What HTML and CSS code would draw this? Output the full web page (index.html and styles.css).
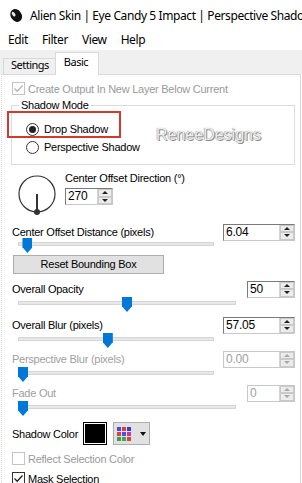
FILE: index.html
```html
<!DOCTYPE html>
<html lang="en">
<head>
  <meta charset="UTF-8">
  <meta name="viewport" content="width=device-width, initial-scale=1.0">
  <title>Perspective Shadow</title>
  <link rel="stylesheet" href="styles.css">
</head>
<body>
  <div class="window">
    <div class="title-bar">
      <svg class="app-icon" width="14" height="15" viewBox="0 0 14 15">
        <ellipse cx="7.2" cy="7.5" rx="5.4" ry="6.8" transform="rotate(-35 7.2 7.5)" fill="#111"/>
        <ellipse cx="4.6" cy="6.2" rx="1.5" ry="2.6" transform="rotate(-35 4.6 6.2)" fill="#e8e8e8"/>
      </svg>
      <span class="title">Alien Skin | Eye Candy 5 Impact | Perspective Shadow</span>
    </div>

    <div class="menu-bar">
      <span class="menu-item">Edit</span>
      <span class="menu-item">Filter</span>
      <span class="menu-item">View</span>
      <span class="menu-item">Help</span>
    </div>

    <div class="tab-strip">
      <div class="tab">Settings</div>
      <div class="tab active">Basic</div>
    </div>

    <div class="panel">
      <div class="check disabled">
        <span class="box">
          <svg width="11" height="11" viewBox="0 0 11 11"><path d="M1.5 5.5 L4.2 8.2 L9.5 2.5" fill="none" stroke="#b5b5b5" stroke-width="1.3"/></svg>
        </span>
        Create Output In New Layer Below Current
      </div>

      <fieldset class="group">
        <legend>Shadow Mode</legend>
        <div class="radio">
          <span class="dot on"></span>Drop Shadow
          <span class="highlight"></span>
          <span class="watermark">ReneeDesigns</span>
        </div>
        <div class="radio">
          <span class="dot"></span>Perspective Shadow
        </div>
      </fieldset>

      <div class="dial-row">
        <svg class="dial" width="40" height="44" viewBox="0 0 40 44">
          <circle cx="20" cy="21" r="18" fill="none" stroke="#333" stroke-width="1.2"/>
          <line x1="20" y1="21" x2="20" y2="39" stroke="#333" stroke-width="2"/>
          <circle cx="20" cy="39" r="3" fill="#333"/>
        </svg>
        <div class="dial-info">
          <div class="label">Center Offset Direction (°)</div>
          <div class="spin narrow">
            <span class="spin-value">270</span>
            <span class="spin-btns"><span class="up"></span><span class="down"></span></span>
          </div>
        </div>
      </div>

      <div class="param tight">
        <div class="param-row">
          <span class="label">Center Offset Distance (pixels)</span>
          <div class="spin wide">
            <span class="spin-value">6.04</span>
            <span class="spin-btns"><span class="up"></span><span class="down"></span></span>
          </div>
        </div>
        <div class="slider">
          <div class="track"></div>
          <div class="rail"><span class="thumb" style="left: 2.4%"></span></div>
        </div>
      </div>

      <div class="reset-btn">Reset Bounding Box</div>

      <div class="param opacity">
        <div class="param-row">
          <span class="label">Overall Opacity</span>
          <div class="spin narrow">
            <span class="spin-value">50</span>
            <span class="spin-btns"><span class="up"></span><span class="down"></span></span>
          </div>
        </div>
        <div class="slider long">
          <div class="track"></div>
          <div class="rail"><span class="thumb" style="left: 50%"></span></div>
        </div>
      </div>

      <div class="param">
        <div class="param-row">
          <span class="label">Overall Blur (pixels)</span>
          <div class="spin wide">
            <span class="spin-value">57.05</span>
            <span class="spin-btns"><span class="up"></span><span class="down"></span></span>
          </div>
        </div>
        <div class="slider">
          <div class="track"></div>
          <div class="rail"><span class="thumb" style="left: 45.6%"></span></div>
        </div>
      </div>

      <div class="param disabled">
        <div class="param-row">
          <span class="label">Perspective Blur (pixels)</span>
          <div class="spin wide">
            <span class="spin-value">0.00</span>
            <span class="spin-btns"><span class="up"></span><span class="down"></span></span>
          </div>
        </div>
        <div class="slider">
          <div class="track"></div>
          <div class="rail"><span class="thumb" style="left: 0%"></span></div>
        </div>
      </div>

      <div class="param disabled">
        <div class="param-row">
          <span class="label">Fade Out</span>
          <div class="spin narrow">
            <span class="spin-value">0</span>
            <span class="spin-btns"><span class="up"></span><span class="down"></span></span>
          </div>
        </div>
        <div class="slider long">
          <div class="track"></div>
          <div class="rail"><span class="thumb" style="left: 0%"></span></div>
        </div>
      </div>

      <div class="color-row">
        <span class="color-label">Shadow Color</span>
        <span class="swatch"></span>
        <span class="palette-btn">
          <span class="palette">
            <i style="background: #4b4bd9"></i><i style="background: #d93a4a"></i><i style="background: #3a3ad0"></i>
            <i style="background: #d8404a"></i><i style="background: #5050e0"></i><i style="background: #c03aa0"></i>
            <i style="background: #3aa048"></i><i style="background: #40a850"></i><i style="background: #d94040"></i>
          </span>
          <span class="caret"></span>
        </span>
      </div>

      <div class="check disabled">
        <span class="box"></span>
        Reflect Selection Color
      </div>

      <div class="check">
        <span class="box">
          <svg width="11" height="11" viewBox="0 0 11 11"><path d="M1.5 5.5 L4.2 8.2 L9.5 2.5" fill="none" stroke="#222" stroke-width="1.3"/></svg>
        </span>
        Mask Selection
      </div>
    </div>
  </div>
</body>
</html>
```

FILE: styles.css
```css
body {
  margin: 0;
  background: #fff;
  font-family: "Liberation Sans", Arial, sans-serif;
  font-size: 11px;
  letter-spacing: -0.25px;
  color: #000;
  overflow: hidden;
}

.window {
  width: 302px;
  height: 483px;
  overflow: hidden;
}

/* title + menu */
.title-bar {
  height: 30px;
  display: flex;
  align-items: center;
  gap: 7px;
  padding-left: 9px;
  font-family: "Noto Sans", sans-serif;
  font-size: 12px;
  letter-spacing: -0.4px;
  white-space: nowrap;
}

.app-icon {
  flex: none;
}

.menu-bar {
  height: 20px;
  display: flex;
  padding-left: 1px;
  font-family: "Noto Sans", sans-serif;
  font-size: 12px;
  letter-spacing: -0.4px;
  line-height: 20px;
}

.menu-item {
  padding: 0 7px;
}

/* tabs */
.tab-strip {
  height: 24px;
  display: flex;
  align-items: flex-end;
  padding-left: 3px;
  background: #f0f0f0;
  font-family: "Noto Sans", sans-serif;
  font-size: 11px;
  letter-spacing: -0.5px;
}

.tab {
  height: 16px;
  line-height: 12px;
  padding: 0 6px 0 7px;
  border: 1px solid #d9d9d9;
  border-bottom: none;
  box-sizing: border-box;
  background: #f0f0f0;
}

.tab.active {
  position: relative;
  z-index: 1;
  height: 23px;
  margin-bottom: -1px;
  line-height: 18px;
  padding: 0 10px 0 8px;
  margin-left: -1px;
  background: #fff;
}

/* main panel */
.panel {
  margin: 0 1px;
  padding: 7px 5px 0 10px;
  border: 1px solid #d9d9d9;
  border-left-style: dotted;
  height: 420px;
}

.check {
  display: flex;
  align-items: center;
  gap: 3px;
  height: 13px;
}

.check + .check {
  margin-top: 7px;
}

.box {
  width: 13px;
  height: 13px;
  box-sizing: border-box;
  border: 1px solid #333;
  background: #fff;
  display: flex;
  align-items: center;
  justify-content: center;
  flex: none;
}

.check.disabled {
  color: #9a9a9a;
}

.check.disabled .box {
  border-color: #c4c4c4;
}

/* shadow mode group */
.group {
  margin: 4px 0 0 -1px;
  padding: 8px 0 8px 14px;
  border: 1px solid #dcdcdc;
}

.group legend {
  line-height: 13px;
  padding: 0 2px;
  margin-left: -7px;
}

.radio {
  position: relative;
  display: flex;
  align-items: center;
  gap: 5px;
  height: 18px;
}

.dot {
  width: 13px;
  height: 13px;
  box-sizing: border-box;
  border: 1px solid #333;
  border-radius: 50%;
  background: #fff;
  display: flex;
  align-items: center;
  justify-content: center;
}

.dot.on::after {
  content: "";
  width: 7px;
  height: 7px;
  border-radius: 50%;
  background: #222;
}

.highlight {
  position: absolute;
  left: -19px;
  top: -9px;
  width: 114px;
  height: 27px;
  box-sizing: border-box;
  border: 2px solid #cf3b2c;
}

.watermark {
  position: absolute;
  left: 130px;
  top: 6px;
  font-family: "Liberation Sans", Arial, sans-serif;
  font-size: 16px;
  line-height: 18px;
  letter-spacing: 0;
  color: #ececec;
  text-shadow: 1px 1px 0 #8c8c8c, -0.5px -0.5px 0 #a8a8a8, 0 0 1px #999;
}

/* direction dial */
.dial-row {
  display: flex;
  margin-top: 8px;
  height: 44px;
}

.dial {
  margin-left: 5px;
}

.dial-info {
  margin-left: 8px;
  margin-top: -1px;
}

.dial-info .label {
  line-height: 13px;
}

.dial-info .spin {
  margin-top: 3px;
}

/* spin boxes */
.spin {
  display: flex;
  height: 17px;
  box-sizing: border-box;
  border: 1px solid #7a7a7a;
  border-right-color: #c8c8c8;
  border-bottom-color: #c8c8c8;
  background: #fff;
}

.spin.narrow {
  width: 48px;
}

.spin.wide {
  width: 72px;
}

.spin-value {
  flex: 1;
  padding-left: 2px;
  line-height: 15px;
  font-size: 12px;
  letter-spacing: -0.2px;
}

.spin-btns {
  width: 14px;
  display: flex;
  flex-direction: column;
  border-left: 1px solid #d4d4d4;
}

.spin-btns span {
  flex: 1;
  display: flex;
  align-items: center;
  justify-content: center;
  background: #ececec;
  border: 1px solid #c9c9c9;
}

.spin-btns .up::after {
  content: "";
  border: 3px solid transparent;
  border-top: none;
  border-bottom: 3px solid #222;
}

.spin-btns .down::after {
  content: "";
  border: 3px solid transparent;
  border-bottom: none;
  border-top: 3px solid #222;
}

/* parameter blocks */
.param {
  margin-top: 6px;
}

.param.tight {
  margin-top: 7px;
}

.param.opacity {
  margin-top: 7px;
}

.param.opacity + .param {
  margin-top: 8px;
}

.param-row {
  display: flex;
  align-items: center;
  justify-content: space-between;
  height: 16px;
}

.param.disabled .label,
.param.disabled .spin-value {
  color: #a0a0a0;
}

.param.disabled .spin {
  border-color: #c8c8c8;
}

.param.disabled .spin-btns .up::after {
  border-bottom-color: #a8a8a8;
}

.param.disabled .spin-btns .down::after {
  border-top-color: #a8a8a8;
}

.slider {
  position: relative;
  height: 12px;
  width: 196px;
  margin-left: 6px;
}

.param.tight .slider {
  margin-top: -2px;
}

.slider.long {
  width: 218px;
}

.track {
  position: absolute;
  left: 0;
  right: 0;
  top: 4px;
  height: 4px;
  box-sizing: border-box;
  background: #e7e7e7;
  border: 1px solid #d6d6d6;
}

.rail {
  position: absolute;
  left: 5px;
  right: 5px;
  top: 0;
  bottom: 0;
}

.thumb {
  position: absolute;
  top: 0;
  width: 10px;
  height: 15px;
  margin-left: -5px;
  background: #0078d7;
  clip-path: polygon(0 0, 100% 0, 100% 62%, 50% 100%, 0 62%);
}

.reset-btn {
  margin: 5px 0 0 1px;
  width: 151px;
  height: 19px;
  box-sizing: border-box;
  border: 1px solid #adadad;
  background: #e1e1e1;
  text-align: center;
  line-height: 17px;
}

/* shadow colour */
.color-row {
  display: flex;
  align-items: center;
  height: 23px;
  margin-top: 9px;
}

.color-label {
  width: 71px;
}

.swatch {
  width: 24px;
  height: 23px;
  box-sizing: border-box;
  border: 1px solid #000;
  background: #000;
  box-shadow: inset 0 0 0 1px #fff;
}

.palette-btn {
  margin-left: 6px;
  width: 37px;
  height: 23px;
  box-sizing: border-box;
  border: 1px solid #adadad;
  background: #e1e1e1;
  display: flex;
  align-items: center;
  padding-left: 3px;
  gap: 9px;
}

.palette {
  display: grid;
  grid-template-columns: repeat(3, 4px);
  grid-template-rows: repeat(3, 4px);
  gap: 1px;
}

.caret {
  border: 3.5px solid transparent;
  border-bottom: none;
  border-top: 4px solid #111;
}

.color-row + .check {
  margin-top: 7px;
}
```
